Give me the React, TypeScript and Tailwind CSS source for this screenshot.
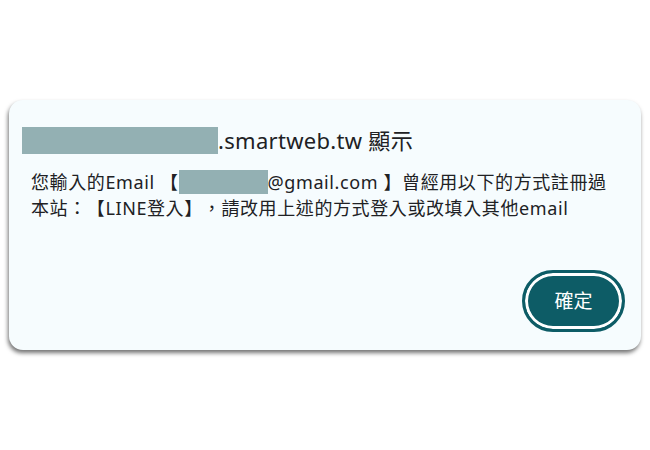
export default function App() {
  return (
    <div className="h-[450px] w-[650px] bg-white pt-[100px] pl-[9px] font-['Noto_Sans','Noto_Sans_CJK_TC',sans-serif] text-[#202124] [text-spacing-trim:space-all]">
      <div className="flex h-[250px] w-[632px] flex-col rounded-[14px] bg-[#f6fcfe] shadow-[-1px_3px_4px_rgba(0,0,0,0.55)]">
        <div className="flex items-center pt-[27px] pl-[13px]">
          <span className="h-[27px] w-[196px] bg-[#93b0b3]" />
          <span className="text-[22px] leading-[27px] tracking-[0.3px]">.smartweb.tw 顯示</span>
        </div>
        <div className="mt-[15px] pl-[22px] text-[18px] leading-[26px] tracking-[0.6px]">
          <div className="flex items-center whitespace-nowrap">
            <span>您輸入的Email 【</span>
            <span className="h-[24px] w-[89px] bg-[#93b0b3]" />
            <span>@gmail.com 】曾經用以下的方式註冊過</span>
          </div>
          <div className="whitespace-nowrap">本站：【LINE登入】，請改用上述的方式登入或改填入其他email</div>
        </div>
        <div className="mt-auto flex justify-end pr-[16px] pb-[18px]">
          <button className="flex h-[62px] w-[103px] items-center justify-center rounded-full border-[3px] border-[#0d5c66] bg-[#0d5c66] text-[19px] text-white shadow-[inset_0_0_0_3px_#ffffff]">
            確定
          </button>
        </div>
      </div>
    </div>
  );
}
